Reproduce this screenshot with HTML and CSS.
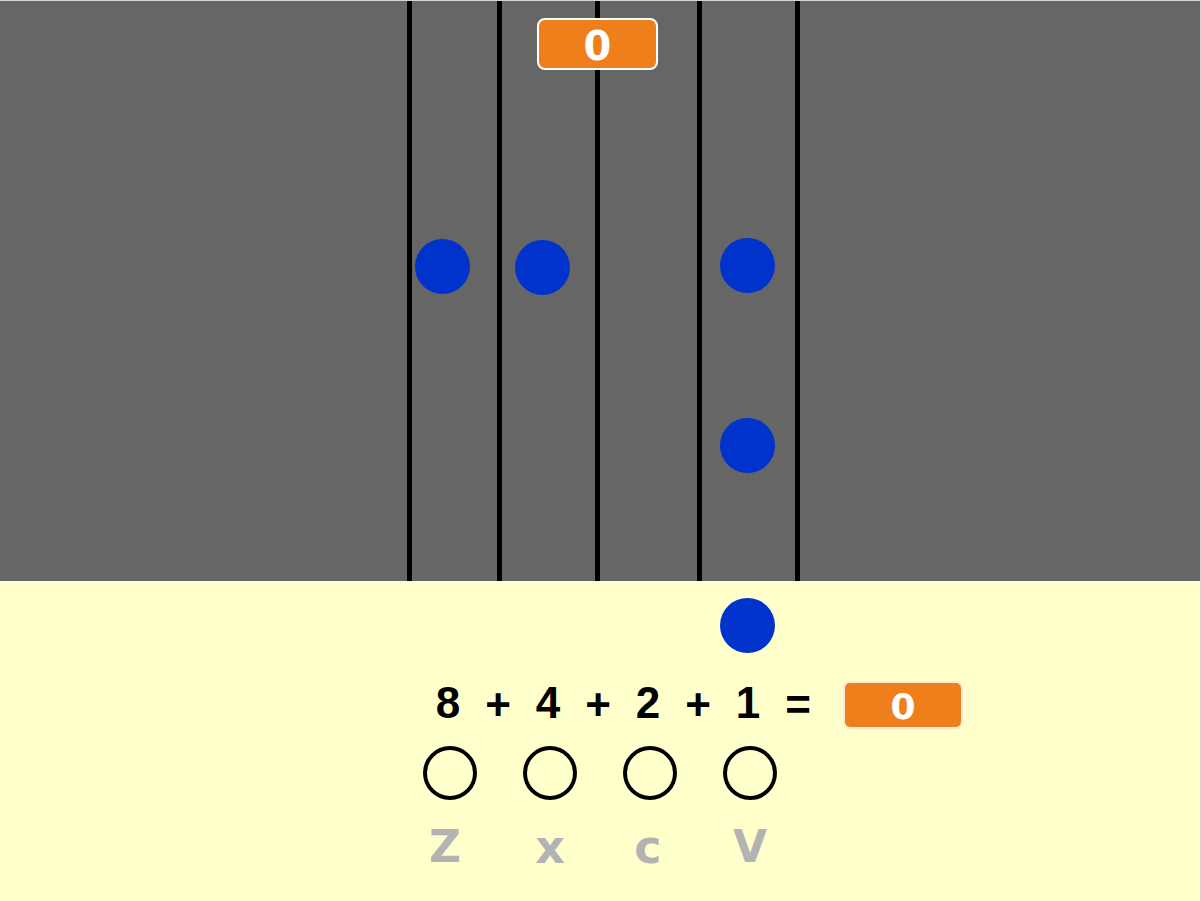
FILE: index.html
```html
<!DOCTYPE html>
<html lang="en">
<head>
<meta charset="utf-8">
<title>Binary Stage</title>
<link rel="stylesheet" href="styles.css">
</head>
<body>
<div class="stage">
  <div class="track">
    <span class="lane l1"></span>
    <span class="lane l2"></span>
    <span class="lane l3"></span>
    <span class="lane l4"></span>
    <span class="lane l5"></span>
    <div class="score top-score">0</div>
  </div>
  <div class="panel">
    <div class="equation">
      <span class="cell">8</span>
      <span class="cell op">+</span>
      <span class="cell">4</span>
      <span class="cell op">+</span>
      <span class="cell">2</span>
      <span class="cell op">+</span>
      <span class="cell">1</span>
      <span class="cell op">=</span>
      <div class="score answer">0</div>
    </div>
    <div class="slots">
      <span class="slot"><span class="ring"></span></span>
      <span class="slot"><span class="ring"></span></span>
      <span class="slot"><span class="ring"></span></span>
      <span class="slot"><span class="ring"></span></span>
    </div>
    <div class="keys">
      <span class="key kz">Z</span>
      <span class="key kx">x</span>
      <span class="key kc">c</span>
      <span class="key kv">V</span>
    </div>
  </div>
  <span class="dot d1"></span>
  <span class="dot d2"></span>
  <span class="dot d3"></span>
  <span class="dot d4"></span>
  <span class="dot d5"></span>
</div>
</body>
</html>
```

FILE: styles.css
```css
html, body {
  margin: 0;
  padding: 0;
}
body {
  width: 1201px;
  height: 901px;
  background: #d4d4d4;
  overflow: hidden;
  font-family: "Liberation Sans", Arial, sans-serif;
}
.stage {
  position: relative;
  width: 1200px;
  height: 900px;
  margin-top: 1px;
  display: flex;
  flex-direction: column;
}
.track {
  position: relative;
  height: 580px;
  background: #666666;
}
.lane {
  position: absolute;
  top: 0;
  bottom: 0;
  width: 5px;
  background: #000;
}
.l1 { left: 407px; }
.l2 { left: 497px; }
.l3 { left: 595px; }
.l4 { left: 697px; }
.l5 { left: 795px; }

.score {
  box-sizing: border-box;
  background: #ef7f1a;
  border: 2px solid #fff;
  color: #fff;
  font-family: "DejaVu Sans", Verdana, sans-serif;
  font-weight: bold;
  display: flex;
  align-items: center;
  justify-content: center;
}
.top-score {
  position: absolute;
  left: 537px;
  top: 17px;
  width: 121px;
  height: 52px;
  border-radius: 8px;
  font-size: 40px;
  padding-top: 3px;
}

.panel {
  flex: 1;
  background: #ffffcc;
  padding-top: 97px;
  box-sizing: border-box;
}
.equation {
  display: flex;
  align-items: flex-start;
  padding-left: 423px;
  height: 50px;
}
.cell {
  width: 50px;
  text-align: center;
  font-size: 44px;
  font-weight: bold;
  line-height: 50px;
  color: #000;
}
.op {
  position: relative;
  top: 2px;
}
.answer {
  margin-left: 20px;
  margin-top: 3px;
  width: 120px;
  height: 48px;
  border-radius: 7px;
  border-color: #fbe9d4;
  font-size: 36px;
  padding-top: 2px;
}

.slots {
  display: flex;
  padding-left: 400px;
  margin-top: 18px;
}
.slot {
  width: 100px;
  display: flex;
  justify-content: center;
}
.ring {
  box-sizing: border-box;
  width: 54px;
  height: 54px;
  border: 4px solid #000;
  border-radius: 50%;
}

.keys {
  display: flex;
  padding-left: 400px;
  margin-top: 22px;
}
.key {
  width: 100px;
  text-align: center;
  font-family: "DejaVu Sans", Verdana, sans-serif;
  font-weight: bold;
  font-size: 44px;
  line-height: 50px;
  color: #b3b3b3;
}
.kz { text-indent: -10px; }
.kx { font-size: 46px; }
.kc { font-size: 46px; text-indent: -4px; }

.dot {
  position: absolute;
  width: 55px;
  height: 55px;
  border-radius: 50%;
  background: #0033cc;
}
.d1 { left: 415px; top: 238px; }
.d2 { left: 515px; top: 239px; }
.d3 { left: 720px; top: 237px; }
.d4 { left: 720px; top: 417px; }
.d5 { left: 720px; top: 597px; }
```
